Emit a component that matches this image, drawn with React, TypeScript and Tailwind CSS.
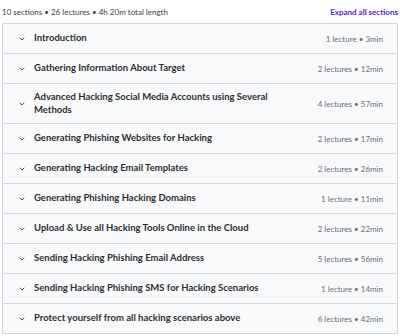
import { ChevronDown } from "lucide-react"

const sections = [
  { title: "Introduction", meta: "1 lecture • 3min" },
  { title: "Gathering Information About Target", meta: "2 lectures • 12min" },
  { title: "Advanced Hacking Social Media Accounts using Several Methods", meta: "4 lectures • 57min" },
  { title: "Generating Phishing Websites for Hacking", meta: "2 lectures • 17min" },
  { title: "Generating Hacking Email Templates", meta: "2 lectures • 26min" },
  { title: "Generating Phishing Hacking Domains", meta: "1 lecture • 11min" },
  { title: "Upload & Use all Hacking Tools Online in the Cloud", meta: "2 lectures • 22min" },
  { title: "Sending Hacking Phishing Email Address", meta: "5 lectures • 56min" },
  { title: "Sending Hacking Phishing SMS for Hacking Scenarios", meta: "1 lecture • 14min" },
  { title: "Protect yourself from all hacking scenarios above", meta: "6 lectures • 42min" },
]

export default function App() {
  return (
    <div className="w-[400px] h-[336px] bg-white overflow-hidden" style={{ fontFamily: "Lato, 'Liberation Sans', sans-serif" }}>
      {/* Header */}
      <div className="flex items-center justify-between h-[23px] pl-[2px] pr-[2px]">
        <span className="text-[8px] text-[#3e4143]">10 sections • 26 lectures • 4h 20m total length</span>
        <button className="text-[8px] font-bold text-[#5624d0]">Expand all sections</button>
      </div>

      {/* Sections */}
      <div className="mx-[2px] border border-[#d1d7dc]">
        {sections.map((s, i) => (
          <div
            key={i}
            className={`flex items-center bg-[#f7f9fa] pl-[15px] pr-[14px] py-[7px] ${i > 0 ? "min-h-[30px] border-t border-[#d1d7dc]" : "min-h-[29px]"}`}
          >
            <ChevronDown className="w-[8px] h-[8px] text-[#2d2f31] shrink-0" strokeWidth={2.5} />
            <div className="flex-1 pl-[8px] pr-[40px] text-[9.5px] font-bold leading-[12.5px] text-[#2d2f31]">
              {s.title}
            </div>
            <span className="text-[8px] text-[#6a6f73] whitespace-nowrap">{s.meta}</span>
          </div>
        ))}
      </div>
    </div>
  )
}
